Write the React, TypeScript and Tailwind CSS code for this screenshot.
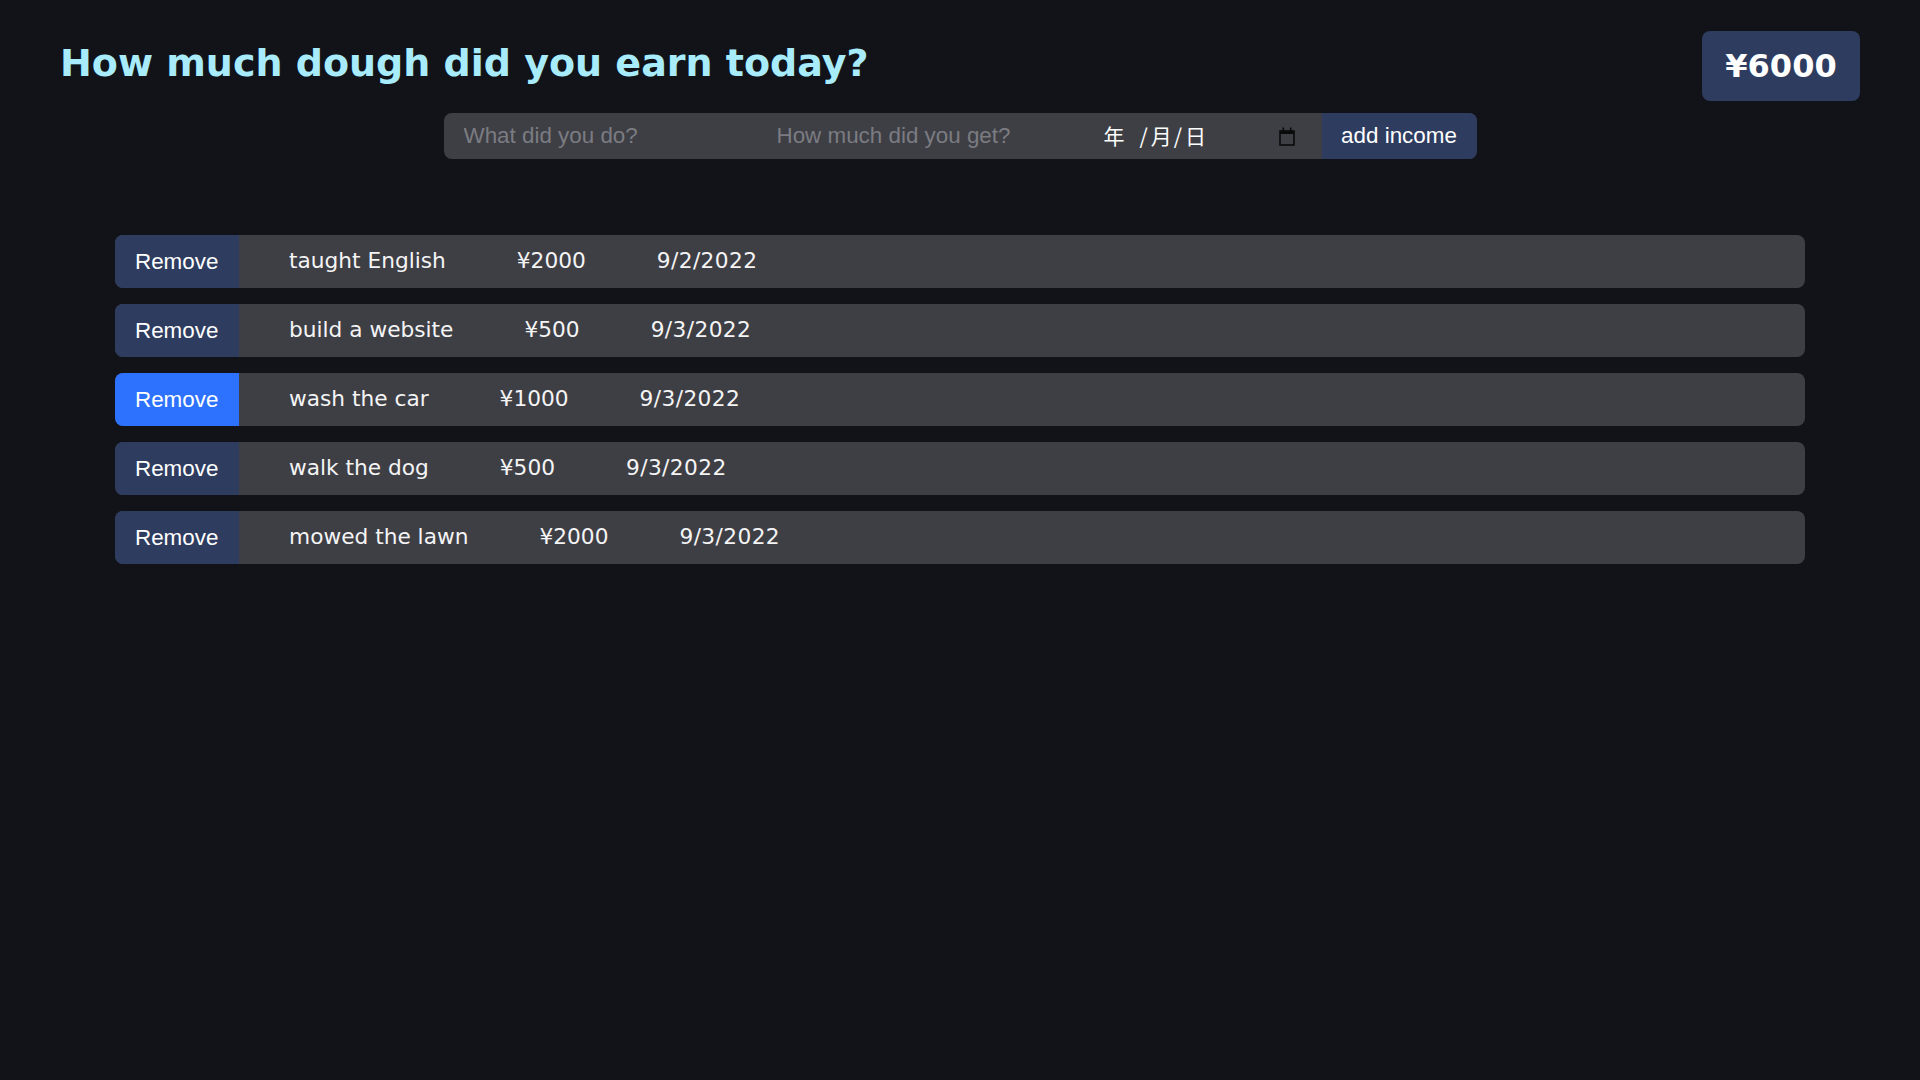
import React from "react";

type Income = { desc: string; price: number; date: string };

const incomes: Income[] = [
  { desc: "taught English", price: 2000, date: "9/2/2022" },
  { desc: "build a website", price: 500, date: "9/3/2022" },
  { desc: "wash the car", price: 1000, date: "9/3/2022" },
  { desc: "walk the dog", price: 500, date: "9/3/2022" },
  { desc: "mowed the lawn", price: 2000, date: "9/3/2022" },
];

/** Chrome's date-picker glyph, drawn in its default near-black. */
function CalendarGlyph() {
  return (
    <svg width="16" height="20" viewBox="0 0 16 20" aria-hidden>
      <rect x="1" y="5" width="14" height="14" fill="none" stroke="#0a0a0a" strokeWidth="1.6" />
      <rect x="1" y="5" width="14" height="3" fill="#0a0a0a" />
      <rect x="3.5" y="1.5" width="1.6" height="4" fill="#0a0a0a" />
      <rect x="10.9" y="1.5" width="1.6" height="4" fill="#0a0a0a" />
    </svg>
  );
}

function IncomeRow({ item, active }: { item: Income; active?: boolean }) {
  return (
    <li className="flex h-[53px] items-center overflow-hidden rounded-lg bg-[#3e3f45]">
      <button
        className={`h-full w-[124px] px-5 text-left font-['Liberation_Sans',Arial,sans-serif] text-[22.4px] text-white ${
          active ? "bg-[#2d72fe]" : "bg-[#2e3c5f]"
        }`}
      >
        Remove
      </button>
      <div className="ml-[50px] flex items-center gap-[71px] font-['DejaVu_Sans',Verdana,sans-serif] text-[21.7px] text-[#f4f4f5]">
        <span>{item.desc}</span>
        <span>¥{item.price}</span>
        <span className="tracking-[0.4px]">{item.date}</span>
      </div>
    </li>
  );
}

export default function App() {
  const total = incomes.reduce((sum, i) => sum + i.price, 0);

  return (
    <div className="min-h-screen bg-[#121319] pb-10">
      {/* ── Header ─────────────────────────────────────────── */}
      <header className="flex items-start justify-between pl-[60px] pr-[60px] pt-[31px]">
        <h1 className="mt-[6px] font-['DejaVu_Sans',Verdana,sans-serif] text-[38px] font-bold leading-[52px] text-[#a8ecfc]">
          How much dough did you earn today?
        </h1>
        <div className="flex h-[70px] w-[158px] items-center justify-center rounded-lg bg-[#2e3c5f] font-['DejaVu_Sans',Verdana,sans-serif] text-[32px] font-bold text-white">
          ¥{total}
        </div>
      </header>

      {/* ── Form ───────────────────────────────────────────── */}
      <form
        className="mx-auto mt-3 flex h-[46px] w-[1033px] overflow-hidden rounded-lg bg-[#3e3f45] font-['Liberation_Sans',Arial,sans-serif] text-[22.4px]"
        onSubmit={(e) => e.preventDefault()}
      >
        <input
          type="text"
          placeholder="What did you do?"
          className="w-[313px] bg-transparent px-5 text-white outline-none placeholder:text-[#7b7c82]"
        />
        <input
          type="text"
          placeholder="How much did you get?"
          className="w-[327px] bg-transparent px-5 text-white outline-none placeholder:text-[#7b7c82]"
        />
        <div className="flex w-[238px] items-center justify-between pl-5 pr-[27px] text-white">
          <span className="flex items-center font-['Noto_Sans_CJK_JP',sans-serif] text-[21px]">
            <span>年</span>
            <span className="ml-[15px]">/</span>
            <span className="ml-[3px]">月</span>
            <span className="ml-[2px]">/</span>
            <span className="ml-[3px]">日</span>
          </span>
          <CalendarGlyph />
        </div>
        <button type="submit" className="flex-1 whitespace-nowrap bg-[#2e3c5f] px-4 text-white">
          add income
        </button>
      </form>

      {/* ── Income list ────────────────────────────────────── */}
      <ul className="mx-[115px] mt-[76px] flex flex-col gap-4">
        {incomes.map((item, i) => (
          <IncomeRow key={item.desc} item={item} active={i === 2} />
        ))}
      </ul>
    </div>
  );
}
